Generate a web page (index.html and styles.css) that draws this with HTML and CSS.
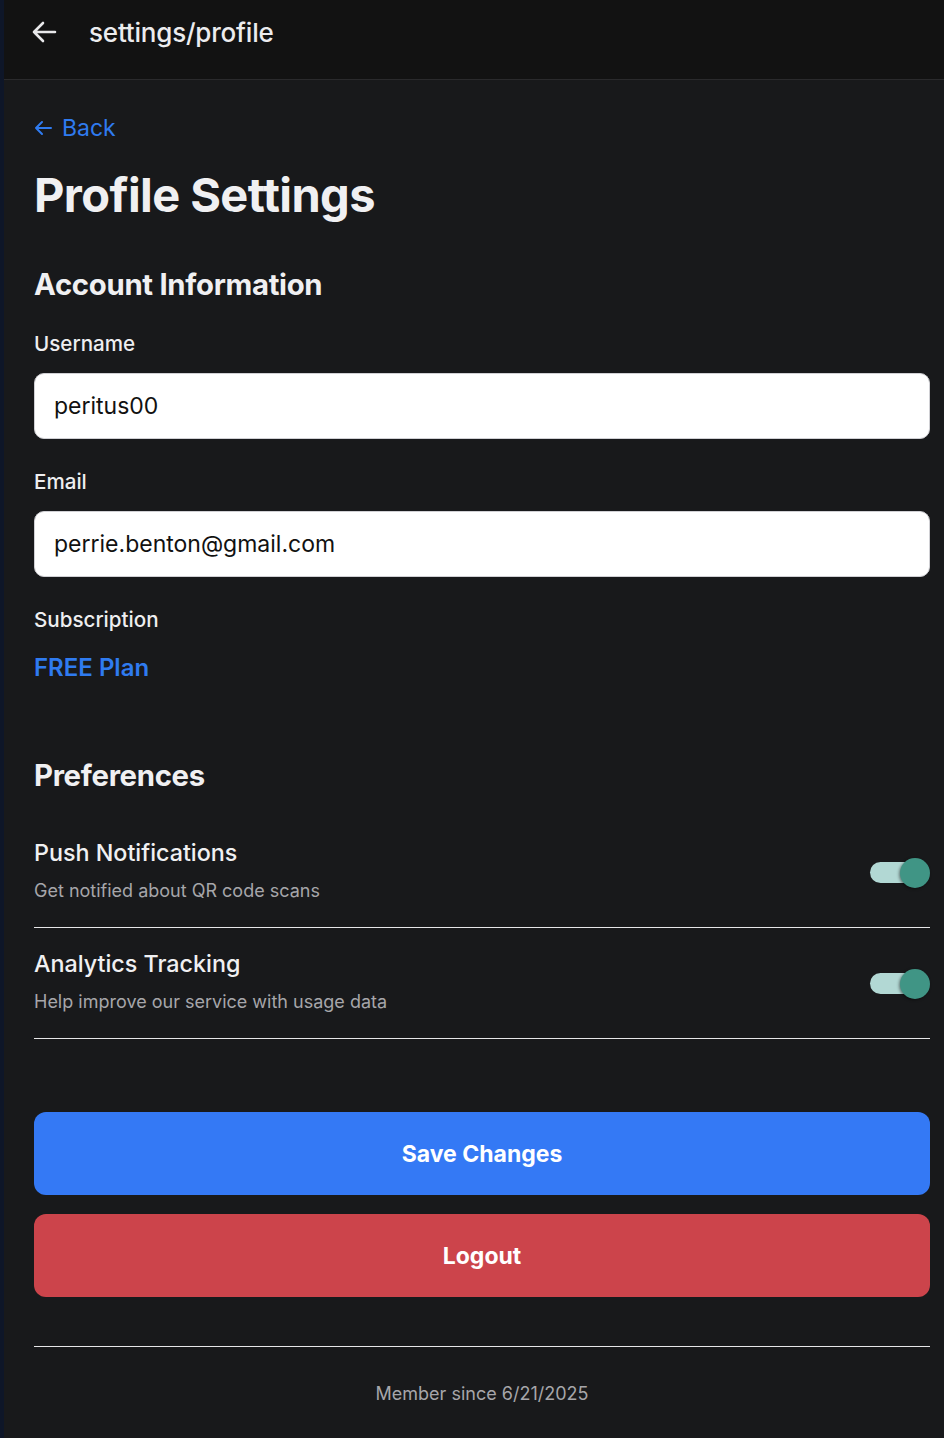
FILE: index.html
```html
<!DOCTYPE html>
<html lang="en">
<head>
<meta charset="utf-8">
<title>settings/profile</title>
<link rel="stylesheet" href="styles.css">
</head>
<body>
<div class="app">
  <div class="rail"></div>
  <div class="page">
    <header class="topbar">
      <svg class="topbar-back" width="26" height="22" viewBox="0 0 26 22" fill="none" stroke="currentColor" stroke-width="2.6" stroke-linecap="round" stroke-linejoin="round"><path d="M24 11H3M12 2L3 11l9 9"/></svg>
      <span class="topbar-title">settings/profile</span>
    </header>
    <main class="content">
      <a class="back-link" href="#"><svg width="18" height="16" viewBox="0 0 18 16" fill="none" stroke="currentColor" stroke-width="2" stroke-linecap="round" stroke-linejoin="round"><path d="M17 8H2M8 2L2 8l6 6"/></svg><span>Back</span></a>
      <h1 class="page-title">Profile Settings</h1>

      <h2 class="section-title">Account Information</h2>
      <label class="field-label">Username</label>
      <div class="field-input">peritus00</div>
      <label class="field-label field-label-next">Email</label>
      <div class="field-input">perrie.benton@gmail.com</div>
      <div class="field-label field-label-next">Subscription</div>
      <div class="plan">FREE Plan</div>

      <h2 class="section-title section-prefs">Preferences</h2>
      <div class="pref-row pref-first">
        <div class="pref-text">
          <div class="pref-title">Push Notifications</div>
          <div class="pref-desc">Get notified about QR code scans</div>
        </div>
        <div class="toggle"><span class="toggle-track"></span><span class="toggle-thumb"></span></div>
      </div>
      <div class="pref-row">
        <div class="pref-text">
          <div class="pref-title">Analytics Tracking</div>
          <div class="pref-desc">Help improve our service with usage data</div>
        </div>
        <div class="toggle"><span class="toggle-track"></span><span class="toggle-thumb"></span></div>
      </div>

      <button class="btn btn-save">Save Changes</button>
      <button class="btn btn-logout">Logout</button>

      <footer class="footer">Member since 6/21/2025</footer>
    </main>
  </div>
</div>
</body>
</html>
```
FILE: styles.css
```css
* { box-sizing: border-box; margin: 0; padding: 0; }
html, body { background: #18191b; }
body {
  font-family: Inter, "Noto Sans", "Liberation Sans", sans-serif;
  color: #f0f0f2;
}
.app { display: flex; min-height: 1438px; }
.rail { width: 4px; flex: none; background: #0e1628; }
.page { flex: 1; display: flex; flex-direction: column; background: #18191b; }

.topbar {
  height: 80px;
  background: #121212;
  border-bottom: 1px solid #2a2a2c;
  display: flex;
  align-items: center;
  padding-left: 27px;
  padding-bottom: 15px;
}
.topbar-back { color: #e8e8ea; flex: none; }
.topbar-title {
  margin-left: 32px;
  font-size: 26px;
  font-weight: 500;
  color: #ececee;
  letter-spacing: -0.2px;
}

.content {
  display: flex;
  flex-direction: column;
  padding: 0 14px 0 30px;
}
.back-link {
  margin-top: 33px;
  height: 30px;
  display: flex;
  align-items: center;
  gap: 10px;
  color: #2f7bf0;
  text-decoration: none;
  font-size: 23px;
  align-self: flex-start;
}
.page-title {
  margin-top: 24px;
  font-size: 47px;
  line-height: 56px;
  font-weight: 700;
  letter-spacing: -0.6px;
  color: #f0f0f2;
}
.section-title {
  margin-top: 44px;
  font-size: 29.3px;
  line-height: 36px;
  font-weight: 700;
  letter-spacing: -0.3px;
  color: #f0f0f2;
}
.field-label {
  margin-top: 28px;
  font-size: 20.6px;
  line-height: 26px;
  font-weight: 500;
  color: #eeeef0;
}
.field-label-next { margin-top: 30px; }
.field-input {
  margin-top: 16px;
  height: 66px;
  background: #ffffff;
  border: 1px solid #d0d0d4;
  border-radius: 10px;
  padding-left: 19px;
  display: flex;
  align-items: center;
  font-size: 23px;
  color: #111111;
}
.plan {
  margin-top: 20px;
  font-size: 24px;
  line-height: 30px;
  font-weight: 600;
  color: #2f7bf0;
}
.section-prefs { margin-top: 75px; }

.pref-row {
  display: flex;
  align-items: center;
  justify-content: space-between;
  padding: 22px 0 24px;
  border-bottom: 1px solid #e6e6e8;
}
.pref-first { margin-top: 23px; }
.pref-text { display: flex; flex-direction: column; gap: 12px; }
.pref-title {
  font-size: 23.3px;
  line-height: 28px;
  font-weight: 500;
  color: #f0f0f2;
}
.pref-desc {
  font-size: 18px;
  line-height: 24px;
  color: #a6a6aa;
}
.toggle {
  position: relative;
  width: 60px;
  height: 30px;
  margin-top: 4px;
}
.toggle-track {
  position: absolute;
  left: 0;
  top: 4px;
  width: 46px;
  height: 21px;
  border-radius: 11px;
  background: #b2d8d4;
}
.toggle-thumb {
  position: absolute;
  right: 0;
  top: 0;
  width: 30px;
  height: 30px;
  border-radius: 50%;
  background: #409585;
  box-shadow: -1px 1px 3px rgba(0,0,0,0.45);
}

.btn {
  height: 83px;
  border: none;
  border-radius: 12px;
  font-family: inherit;
  font-size: 23px;
  font-weight: 700;
  color: #ffffff;
  cursor: pointer;
}
.btn-save { margin-top: 73px; background: #3479f5; }
.btn-logout { margin-top: 19px; background: #cc444b; }

.footer {
  margin-top: 49px;
  border-top: 1px solid #e6e6e8;
  padding-top: 35px;
  font-size: 18px;
  line-height: 24px;
  color: #a6a6aa;
  text-align: center;
}
```
